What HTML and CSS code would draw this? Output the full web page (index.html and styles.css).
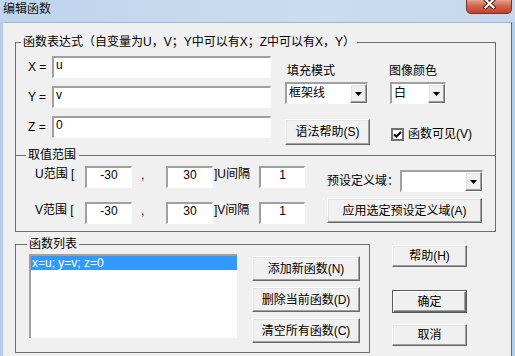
FILE: index.html
```html
<!DOCTYPE html>
<html lang="zh-CN">
<head>
<meta charset="utf-8">
<title>编辑函数</title>
<link rel="stylesheet" href="styles.css">
</head>
<body>
<div class="window">
  <div class="titlebar">
    <span class="title">编辑函数</span>
    <div class="close">
      <svg width="13" height="11" viewBox="0 0 13 11"><path d="M2.5 1.5 L10.5 9.5 M10.5 1.5 L2.5 9.5" stroke="#5b2016" stroke-width="4.2" stroke-linecap="square"/><path d="M2.5 1.5 L10.5 9.5 M10.5 1.5 L2.5 9.5" stroke="#ffffff" stroke-width="2.2" stroke-linecap="square"/></svg>
    </div>
  </div>
  <div class="client">
    <fieldset class="group group-main">
      <legend>函数表达式（自变量为U，V；Y中可以有X；Z中可以有X，Y）</legend>
      <div class="expr">
        <div class="expr-fields">
          <div class="expr-row"><span class="expr-label">X =</span><div class="edit edit-expr">u</div></div>
          <div class="expr-row"><span class="expr-label">Y =</span><div class="edit edit-expr">v</div></div>
          <div class="expr-row"><span class="expr-label">Z =</span><div class="edit edit-expr">0</div></div>
        </div>
        <div class="opt-col opt-fill">
          <div class="opt-label">填充模式</div>
          <div class="combo combo-fill"><span class="combo-text">框架线</span><span class="combo-btn"><svg width="7" height="4" viewBox="0 0 7 4"><polygon points="0,0 7,0 3.5,4" fill="#000"/></svg></span></div>
          <button class="btn btn-syntax">语法帮助(S)</button>
        </div>
        <div class="opt-col opt-color">
          <div class="opt-label">图像颜色</div>
          <div class="combo combo-color"><span class="combo-text">白</span><span class="combo-btn"><svg width="7" height="4" viewBox="0 0 7 4"><polygon points="0,0 7,0 3.5,4" fill="#000"/></svg></span></div>
          <div class="check"><span class="check-box"><svg width="9" height="9" viewBox="0 0 9 9"><path d="M1 4.2 L3.4 6.6 L8 2" stroke="#000" stroke-width="2" fill="none"/></svg></span><span class="check-text">函数可见(V)</span></div>
        </div>
      </div>
      <div class="sep"><span class="sep-text">取值范围</span></div>
      <div class="range">
        <div class="range-grid">
          <span class="rlabel">U范围 [</span>
          <div class="edit num">-30</div>
          <span class="comma">,</span>
          <div class="edit num">30</div>
          <span class="rlabel rlabel-step">]U间隔</span>
          <div class="edit num">1</div>
          <span class="rlabel">V范围 [</span>
          <div class="edit num">-30</div>
          <span class="comma">,</span>
          <div class="edit num">30</div>
          <span class="rlabel rlabel-step">]V间隔</span>
          <div class="edit num">1</div>
        </div>
        <div class="preset">
          <div class="preset-row"><span class="preset-label">预设定义域：</span><div class="combo combo-preset"><span class="combo-text"></span><span class="combo-btn"><svg width="7" height="4" viewBox="0 0 7 4"><polygon points="0,0 7,0 3.5,4" fill="#000"/></svg></span></div></div>
          <button class="btn btn-apply">应用选定预设定义域(A)</button>
        </div>
      </div>
    </fieldset>
    <div class="bottom">
      <fieldset class="group group-list">
        <legend>函数列表</legend>
        <div class="list-area">
          <div class="listbox"><div class="item selected">x=u; y=v; z=0</div></div>
          <div class="list-btns">
            <button class="btn btn-list">添加新函数(N)</button>
            <button class="btn btn-list">删除当前函数(D)</button>
            <button class="btn btn-list">清空所有函数(C)</button>
          </div>
        </div>
      </fieldset>
      <div class="dlg-btns">
        <button class="btn btn-dlg btn-help">帮助(H)</button>
        <button class="btn btn-dlg btn-ok">确定</button>
        <button class="btn btn-dlg btn-cancel">取消</button>
      </div>
    </div>
  </div>
</div>
</body>
</html>
```
FILE: styles.css
```css
html, body {
  margin: 0;
  padding: 0;
}
body {
  background: #b4cde9;
  font-family: "Liberation Sans", "Noto Sans CJK SC", sans-serif;
  font-size: 12px;
  line-height: 14px;
  color: #000;
}
.window {
  width: 515px;
  height: 356px;
  overflow: hidden;
  display: flex;
  flex-direction: column;
}
.titlebar {
  height: 22px;
  flex: none;
  display: flex;
  justify-content: space-between;
  align-items: flex-start;
  background: linear-gradient(to right, #bfd5ed, #cadcf1 60%, #c4d9ef);
}
.title {
  margin: 2px 0 0 3px;
  color: #111;
}
.close {
  width: 46px;
  height: 14px;
  box-sizing: border-box;
  margin-right: 3px;
  border: 1px solid #7c3023;
  border-top: none;
  border-radius: 0 0 5px 5px;
  background: linear-gradient(#e7a293, #d2654f 45%, #c2412a);
  display: flex;
  justify-content: center;
  align-items: flex-start;
}
.close svg {
  margin-top: -2px;
}
.client {
  flex: 1;
  margin-left: 3px;
  width: 509px;
  box-sizing: border-box;
  background: #f0f0f0;
  border-top: 1px solid #a3b4c6;
  border-left: 1px solid #dfe7f0;
  border-right: 1px solid #6a6a6a;
}
.group {
  margin: 0;
  padding: 0;
  min-width: 0;
  border: 1px solid #6e6e6e;
  box-sizing: border-box;
}
.group legend {
  padding: 0 2px;
  line-height: 14px;
}
.group-main {
  margin: 12px 0 0 11px;
  width: 481px;
}
.group-main legend {
  margin-left: 5px;
}
.expr {
  display: flex;
  padding: 7px 0 3px 12px;
}
.expr-fields {
  display: flex;
  flex-direction: column;
  gap: 8px;
}
.expr-row {
  display: flex;
  align-items: center;
}
.expr-label {
  width: 24px;
}
.edit {
  box-sizing: border-box;
  height: 22px;
  background: #fff;
  border-style: solid;
  border-width: 2px 1px 1px 2px;
  border-color: #a0a0a0 #fff #fff #a0a0a0;
}
.edit-expr {
  width: 219px;
  padding: 0 2px;
  line-height: 14px;
}
.opt-col {
  display: flex;
  flex-direction: column;
  padding-top: 8px;
}
.opt-fill {
  width: 85px;
  margin-left: 14px;
}
.opt-color {
  margin-left: 17px;
}
.opt-label {
  margin-left: 2px;
}
.combo {
  display: flex;
  height: 22px;
  box-sizing: border-box;
  background: #fff;
  border-style: solid;
  border-width: 2px 1px 1px 2px;
  border-color: #a0a0a0 #fff #fff #a0a0a0;
}
.combo-text {
  flex: 1;
  padding-left: 2px;
  line-height: 19px;
}
.combo-btn {
  width: 17px;
  box-sizing: border-box;
  background: #f0f0f0;
  border: 1px solid;
  border-color: #fff #696969 #696969 #fff;
  box-shadow: inset -1px -1px 0 #a0a0a0, inset 1px 1px 0 #e3e3e3;
  display: flex;
  align-items: center;
  justify-content: center;
}
.combo-fill {
  width: 83px;
  margin-top: 4px;
}
.combo-color {
  width: 56px;
  margin: 4px 0 0 3px;
}
.btn {
  font: inherit;
  color: #000;
  background: #f0f0f0;
  box-sizing: border-box;
  margin: 0;
  padding: 0;
  border: 1px solid;
  border-color: #fff #696969 #696969 #fff;
  box-shadow: inset -1px -1px 0 #a0a0a0, inset 1px 1px 0 #e3e3e3;
  text-align: center;
  line-height: 14px;
}
.btn-syntax {
  width: 85px;
  height: 26px;
  margin-top: 15px;
}
.check {
  display: flex;
  align-items: center;
  margin: 23px 0 0 4px;
}
.check-box {
  width: 13px;
  height: 13px;
  box-sizing: border-box;
  background: #fff;
  border: 2px solid #707070;
  display: flex;
  align-items: center;
  justify-content: center;
}
.check-text {
  margin-left: 4px;
}
.sep {
  display: flex;
  align-items: center;
  height: 14px;
}
.sep::before {
  content: "";
  width: 10px;
  height: 1px;
  background: #6e6e6e;
}
.sep::after {
  content: "";
  flex: 1;
  height: 1px;
  background: #6e6e6e;
}
.sep-text {
  padding: 0 3px 0 2px;
}
.range {
  display: flex;
  padding: 4px 0 7px 19px;
}
.range-grid {
  display: grid;
  grid-template-columns: 50px 47px 34px 47px 46px 46px;
  grid-auto-rows: 22px;
  row-gap: 14px;
}
.rlabel {
  padding-top: 1px;
}
.rlabel-step {
  padding-left: 1px;
}
.comma {
  padding: 2px 0 0 9px;
}
.num {
  text-align: center;
  line-height: 14px;
}
.preset {
  margin-left: 22px;
  display: flex;
  flex-direction: column;
}
.preset-row {
  display: flex;
  align-items: center;
  margin-top: 4px;
}
.preset-label {
  width: 73px;
}
.combo-preset {
  width: 83px;
}
.btn-apply {
  width: 155px;
  height: 25px;
  margin-top: 6px;
}
.bottom {
  display: flex;
  margin: 5px 0 0 11px;
}
.group-list {
  width: 355px;
  height: 116px;
}
.group-list legend {
  margin-left: 11px;
}
.list-area {
  display: flex;
  padding: 3px 0 0 13px;
}
.listbox {
  width: 208px;
  height: 84px;
  box-sizing: border-box;
  background: #fff;
  border-style: solid;
  border-width: 2px 0 0 2px;
  border-color: #a0a0a0;
}
.item {
  height: 14px;
  padding-left: 1px;
  line-height: 14px;
}
.item.selected {
  background: #3399ff;
  color: #fff;
}
.list-btns {
  display: flex;
  flex-direction: column;
  gap: 6px;
  margin: 2px 0 0 15px;
}
.btn-list {
  width: 108px;
  height: 25px;
}
.dlg-btns {
  display: flex;
  flex-direction: column;
  margin-left: 22px;
}
.btn-dlg {
  width: 75px;
  height: 22px;
}
.btn-help {
  margin-top: 8px;
}
.btn-ok {
  height: 23px;
  margin-top: 23px;
  border: 1px solid #5a5a5a;
  box-shadow: inset 1px 1px 0 #fff, inset -1px -1px 0 #696969, inset -2px -2px 0 #a0a0a0;
}
.btn-cancel {
  margin-top: 11px;
}
```
